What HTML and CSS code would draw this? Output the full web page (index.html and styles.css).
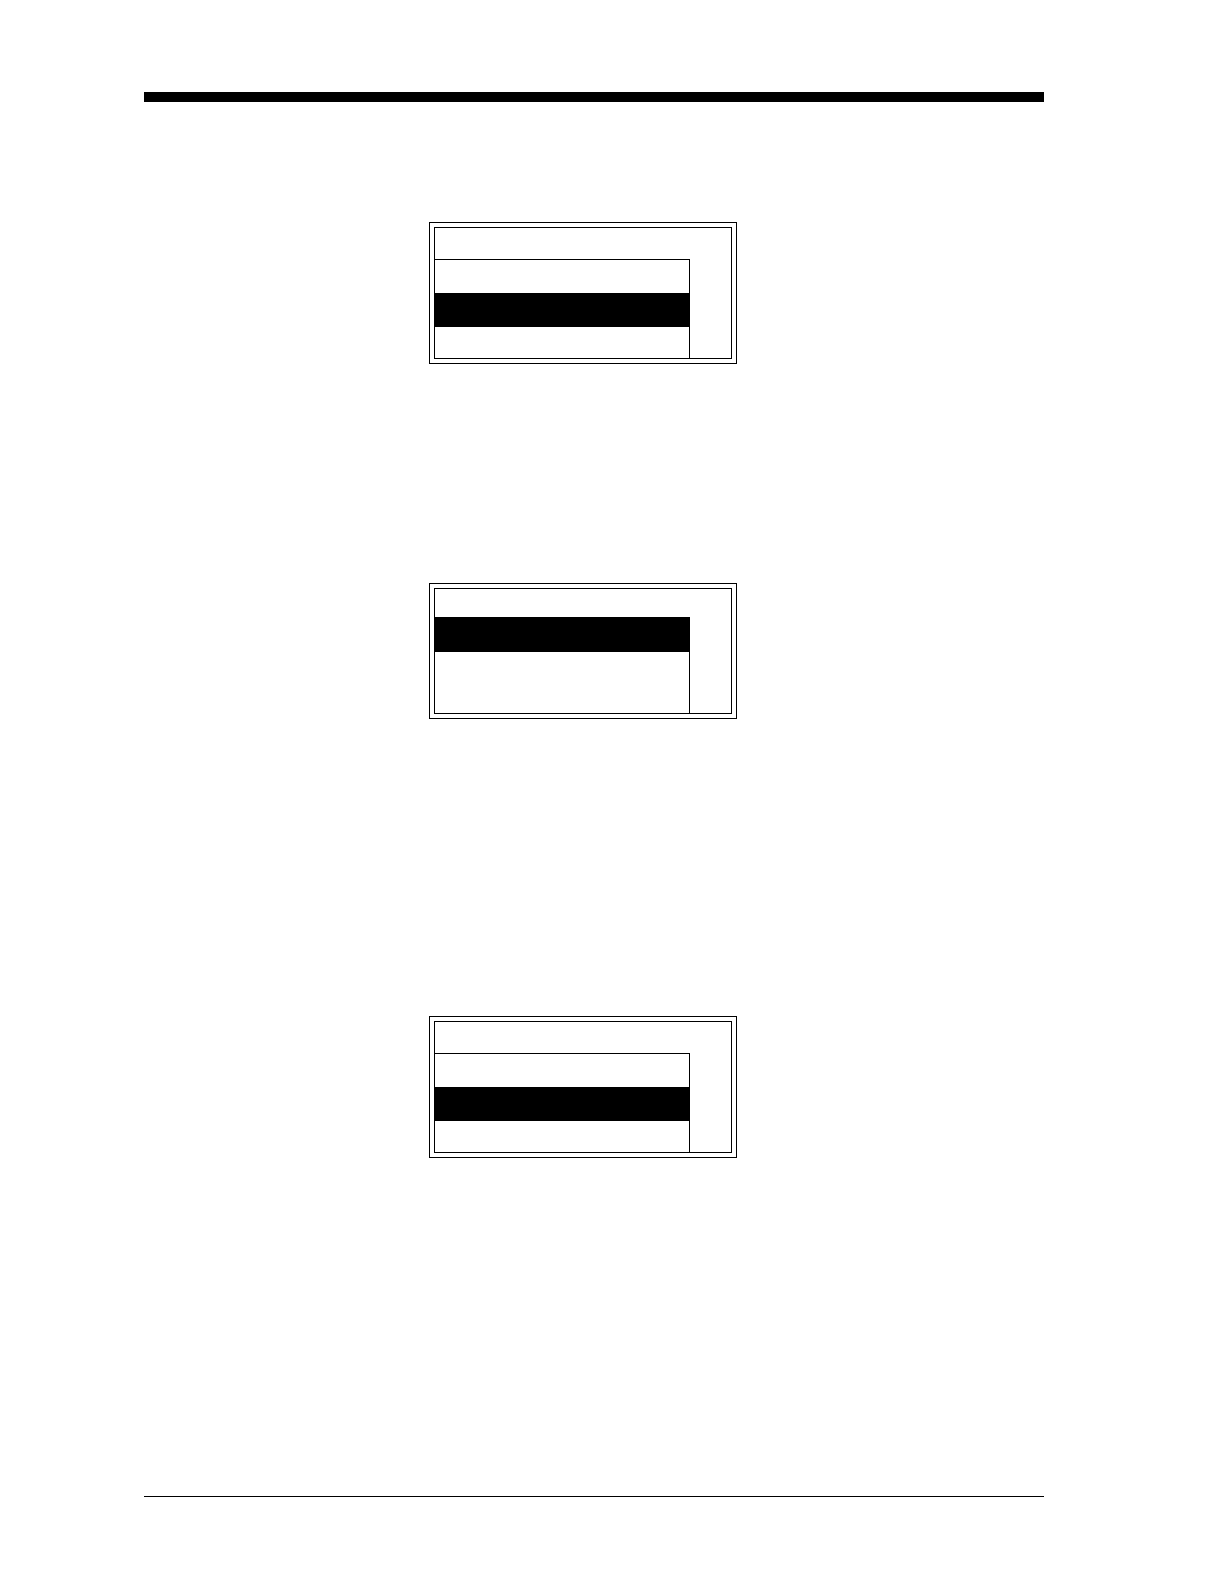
FILE: index.html
```
<!DOCTYPE html>
<html lang="en">
<head>
    <meta charset="UTF-8">
    <meta name="viewport" content="width=device-width, initial-scale=1.0">
    <title>Display Screens</title>
    <link rel="stylesheet" href="styles.css">
</head>
<body>
    <header class="page-header"></header>

    <main class="content">
        <div class="display">
            <div class="screen">
                <div class="title-row"></div>
                <div class="menu">
                    <div class="row"></div>
                    <div class="row selected"></div>
                    <div class="row last"></div>
                </div>
            </div>
        </div>

        <div class="display second">
            <div class="screen">
                <div class="title-row short"></div>
                <div class="menu">
                    <div class="row selected"></div>
                    <div class="row tall"></div>
                </div>
            </div>
        </div>

        <div class="display third">
            <div class="screen">
                <div class="title-row"></div>
                <div class="menu">
                    <div class="row"></div>
                    <div class="row selected"></div>
                    <div class="row last"></div>
                </div>
            </div>
        </div>
    </main>

    <footer class="page-footer"></footer>
</body>
</html>
```

FILE: styles.css
```
* {
    box-sizing: border-box;
}

body {
    display: flex;
    flex-direction: column;
    min-height: 100vh;
    margin: 0;
    padding: 92px 180px 87px 144px;
    font-family: "Liberation Sans", Arial, sans-serif;
    color: #000;
    background-color: #fff;
}

.page-header {
    border-top: 10px solid #000;
}

.content {
    flex: 1;
    padding: 120px 0 120px 285px;
}

/* Double frame around each display */
.display {
    max-width: 308px;
    padding: 4px;
    border: 1px solid #000;
}

.second {
    margin-top: 219px;
}

.third {
    margin-top: 297px;
}

.screen {
    border: 1px solid #000;
}

.title-row {
    min-height: 31px;
}

.title-row.short {
    min-height: 28px;
}

.menu {
    margin-right: 41px;
    border-top: 1px solid #000;
    border-right: 1px solid #000;
}

.row {
    min-height: 33px;
}

.row.selected {
    min-height: 34px;
    color: #fff;
    background-color: #000;
}

.row.last {
    min-height: 31px;
}

.row.tall {
    min-height: 61px;
}

.page-footer {
    border-top: 1px solid #000;
}
```
